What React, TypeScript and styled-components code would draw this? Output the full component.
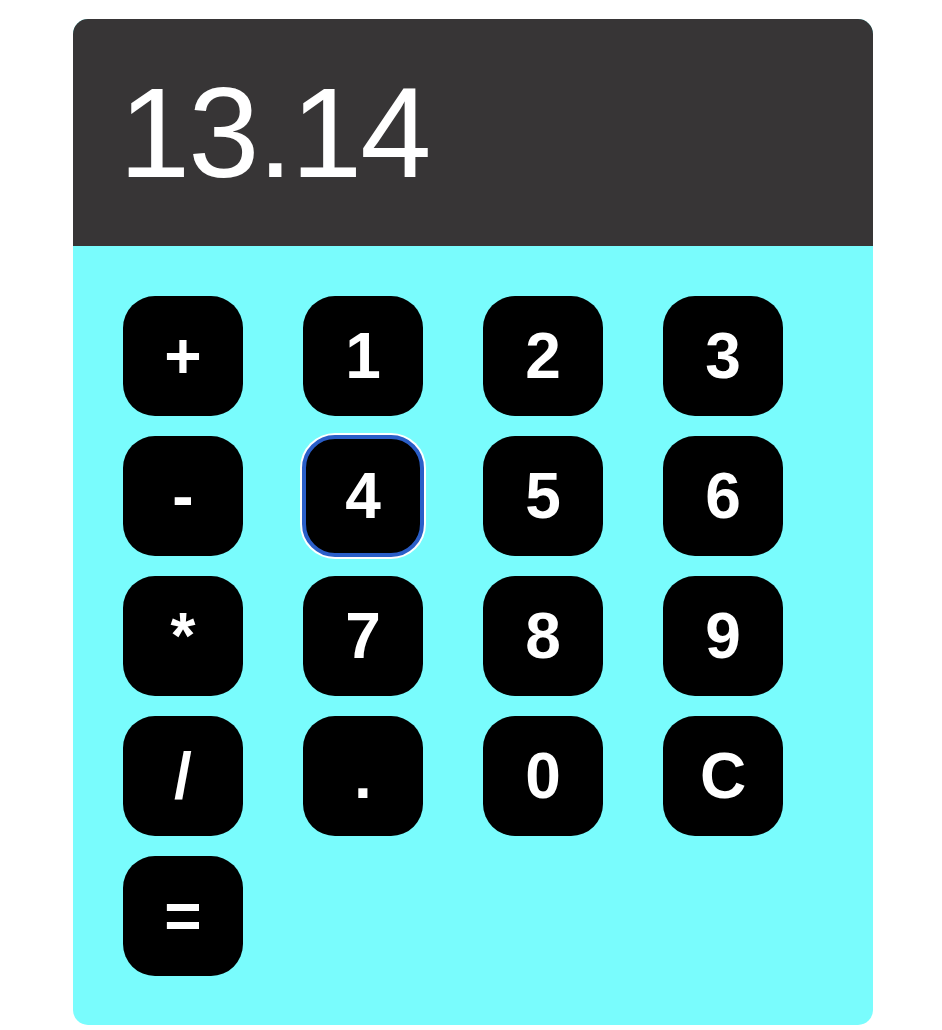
import React from 'react';
import styled, { createGlobalStyle } from 'styled-components';

const GlobalStyle = createGlobalStyle`
    html, body {
        margin: 0;
        padding: 0;
        background: #ffffff;
        font-family: "Liberation Sans", Arial, sans-serif;
    }
`;

const Page = styled.div`
    padding: 19px 0 0 73px;
`;

const Calculator = styled.div`
    width: 800px;
    border-radius: 15px;
    overflow: hidden;
    background-color: #79fcfd;
`;

const Display = styled.div`
    background-color: #373536;
    color: #ffffff;
    font-size: 128px;
    line-height: 143px;
    letter-spacing: -2px;
    padding: 42px 46px;
    white-space: nowrap;
`;

const Keypad = styled.div`
    display: grid;
    grid-template-columns: repeat(4, 120px);
    grid-auto-rows: 120px;
    column-gap: 60px;
    row-gap: 20px;
    padding: 50px 50px 49px;
`;

const Key = styled.button<{ $focused?: boolean }>`
    width: 120px;
    height: 120px;
    border: none;
    border-radius: 32px;
    background-color: #000000;
    color: #ffffff;
    font-family: "Liberation Sans", Arial, sans-serif;
    font-weight: bold;
    font-size: 64px;
    display: flex;
    align-items: center;
    justify-content: center;
    padding: 0;
    cursor: pointer;
    outline: ${(p) => (p.$focused ? '4px solid #2a5ec8' : 'none')};
    outline-offset: -3px;
    box-shadow: ${(p) => (p.$focused ? '0 0 0 3px #ffffff' : 'none')};
`;

const keys = ['+', '1', '2', '3', '-', '4', '5', '6', '*', '7', '8', '9', '/', '.', '0', 'C', '='];

export default function App() {
    return (
        <>
            <GlobalStyle />
            <Page>
                <Calculator>
                    <Display>13.14</Display>
                    <Keypad>
                        {keys.map((k) => (
                            <Key key={k} $focused={k === '4'}>
                                {k}
                            </Key>
                        ))}
                    </Keypad>
                </Calculator>
            </Page>
        </>
    );
}
